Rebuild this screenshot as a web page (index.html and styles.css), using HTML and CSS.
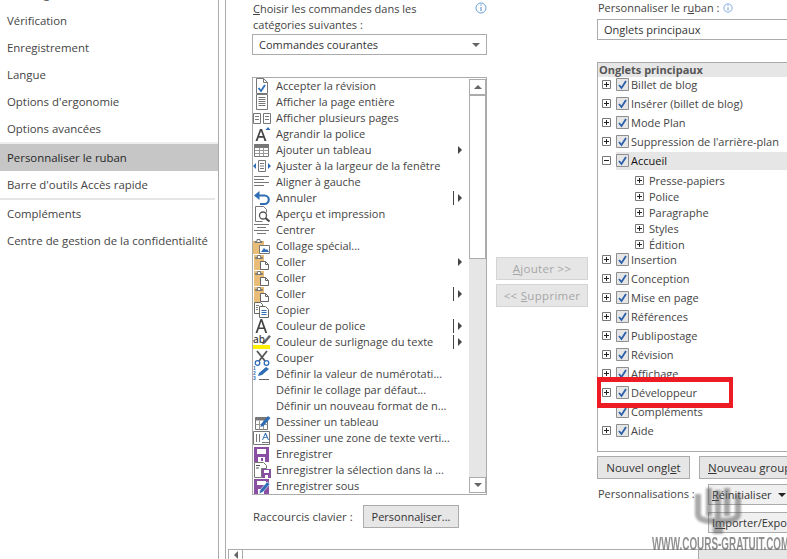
FILE: index.html
```html
<!DOCTYPE html>
<html lang="fr">
<head>
<meta charset="utf-8">
<title>Options Word</title>
<link rel="stylesheet" href="styles.css">
</head>
<body>
<svg class="defs" width="0" height="0" aria-hidden="true">
  <symbol id="i-accept" viewBox="0 0 18 16"><path d="M3.5.5h7l4 4v11h-11z" fill="#fff" stroke="#777"/><path d="M10.500.5v4h4" fill="none" stroke="#777"/><path d="M5.500 10l2.500 3 4-6" fill="none" stroke="#2f6db5" stroke-width="1.800"/></symbol>
  <symbol id="i-page" viewBox="0 0 18 16"><path d="M3.500.5h11v15h-11z" fill="#fff" stroke="#777"/><path d="M5.500 3.500h7M5.500 5.500h7M5.500 7.500h7M5.500 9.500h7M5.500 11.500h7" stroke="#777"/></symbol>
  <symbol id="i-pages" viewBox="0 0 18 16"><path d="M.5 3.500h7v10h-7zM10.500 3.500h7v10h-7z" fill="#fff" stroke="#777"/><path d="M2 6.500h4M2 9.500h4M12 6.500h4M12 9.500h4" stroke="#777"/></symbol>
  <symbol id="i-grow" viewBox="0 0 18 16"><path d="M2.500 15L7 3h2l4.500 12h-2l-1.100-3.200H5.600L4.500 15zM6.200 10h3.600L8 4.900z" fill="#444"/><path d="M12.500 4l2.500-3 2.500 3z" fill="#2f6db5"/></symbol>
  <symbol id="i-table" viewBox="0 0 18 16"><path d="M1.500 2.500h14v12h-14z" fill="#fff" stroke="#777"/><path d="M1.500 2.500h14v3h-14z" fill="#777" stroke="#777"/><path d="M1.500 8.500h14M1.500 11.500h14M6.500 5.500v9M10.500 5.500v9" stroke="#999"/></symbol>
  <symbol id="i-fit" viewBox="0 0 18 16"><path d="M5.500 2.500h7v11h-7z" fill="#fff" stroke="#777"/><path d="M7 5.500h4M7 8h4M7 10.500h4" stroke="#777"/><path d="M0 8l3-3v6zM18 8l-3-3v6z" fill="#2f6db5"/></symbol>
  <symbol id="i-left" viewBox="0 0 18 16"><path d="M1 2.500h15M1 5.500h10M1 8.500h15M1 11.500h10" stroke="#777"/></symbol>
  <symbol id="i-undo" viewBox="0 0 18 16"><path d="M5 5.500h6.500a4 4 0 0 1 0 8.500H7" fill="none" stroke="#2f6db5" stroke-width="2.200"/><path d="M1 5.500L6.500 1v9z" fill="#2f6db5"/></symbol>
  <symbol id="i-preview" viewBox="0 0 18 16"><path d="M2.500.5h8l3 3v3M2.500.5v15h7" fill="none" stroke="#777"/><circle cx="10" cy="9.500" r="3.500" fill="#fff" stroke="#555" stroke-width="1.300"/><path d="M12.500 12l4 3.500" stroke="#444" stroke-width="2"/></symbol>
  <symbol id="i-center" viewBox="0 0 18 16"><path d="M1 2.500h15M4 5.500h9M1 8.500h15M4 11.500h9" stroke="#777"/></symbol>
  <symbol id="i-pastes" viewBox="0 0 18 16"><path d="M0 3h11v13H0z" fill="#e9bd78"/><path d="M4 1.500h3v2h2v1H2v-1h2z" fill="#fff" stroke="#777"/><path d="M6.500 7.500h10v8h-10z" fill="#fff" stroke="#777"/><path d="M8 14l3-4 2 2 1-1 2 3z" fill="#2f6db5"/></symbol>
  <symbol id="i-paste" viewBox="0 0 18 16"><path d="M1 1h10v15H1z" fill="#e9bd78"/><path d="M4.500 1.500h3v2h2v1h-7v-1h2z" fill="#fff" stroke="#777"/><path d="M7.500 7.500h5l3 3v5h-8z" fill="#fff" stroke="#666"/><path d="M12.500 7.500v3h3" fill="none" stroke="#666"/></symbol>
  <symbol id="i-copy" viewBox="0 0 18 16"><path d="M1.500.5h6l2 2v9h-8z" fill="#fff" stroke="#666"/><path d="M6.500 4.500h6l3 3v8h-9z" fill="#fff" stroke="#666"/><path d="M8.500 8.500h5M8.500 10.500h5M8.500 12.500h5" stroke="#2f6db5"/><path d="M3 3.500h3M3 5.500h2M3 7.500h2" stroke="#777"/></symbol>
  <symbol id="i-font" viewBox="0 0 18 16"><path d="M2.500 15L7.500 1h1.700l5 14h-1.900l-1.400-4H5.800l-1.400 4zM6.400 9.400h3.900L8.300 3.500z" fill="#444"/></symbol>
  <symbol id="i-high" viewBox="0 0 18 16"><path d="M10 8l6-7 2 1.500-6 7-3 1z" fill="#666"/><path d="M0 11h17v4H0z" fill="#ffef00"/></symbol>
  <symbol id="i-cut" viewBox="0 0 18 16"><path d="M4 1l8 10M14 1l-8 10" stroke="#555" stroke-width="1.800"/><circle cx="4.500" cy="13" r="2.300" fill="#fff" stroke="#2f6db5" stroke-width="1.300"/><circle cx="13.500" cy="13" r="2.300" fill="#fff" stroke="#2f6db5" stroke-width="1.300"/></symbol>
  <symbol id="i-num" viewBox="0 0 18 16"><path d="M6 7l7-6 3 2-7 6-4 1z" fill="#2f6db5"/><path d="M6 13.500h10" stroke="#666"/></symbol>
  <symbol id="i-draw" viewBox="0 0 18 16"><path d="M2.500 3.500h12v12h-12z" fill="#fff" stroke="#777"/><path d="M2.500 3.500h12v3h-12z" fill="#777"/><path d="M2.500 10.500h12M6.500 6.500v9M10.500 6.500v9" stroke="#999"/><path d="M8 10l7-8 2.500 2-7 8-3 1z" fill="#2f6db5"/></symbol>
  <symbol id="i-vtext" viewBox="0 0 18 16"><path d="M.5 1.500h16v13H.5z" fill="#fff" stroke="#777"/><path d="M3.500 4v8M6.500 4v8" stroke="#777"/><path d="M9 10l3-7h1l3 7h-1l-.8-2h-3.400L10 10zM11 7.200h2.600L12.500 4.400z" fill="#2f6db5"/><path d="M9 12.500h7" stroke="#777"/></symbol>
  <symbol id="i-save" viewBox="0 0 18 16"><path d="M1 1h15v15H1z" fill="#8a4ea3"/><path d="M4 3h9v5H4z" fill="#fff"/><path d="M5 11h7v5H5z" fill="#fff"/><path d="M8 12h2v3H8z" fill="#8a4ea3"/></symbol>
  <symbol id="i-saves" viewBox="0 0 18 16"><path d="M1.500.5h9l3 3v3h-5v9h-7z" fill="#fff" stroke="#777"/><path d="M3 3.500h4M3 6h3" stroke="#555"/><path d="M9 7h9v9H9z" fill="#8a4ea3"/><path d="M11 8h5v3h-5zM12 13h3v3h-3z" fill="#fff"/></symbol>
  <symbol id="i-saveas" viewBox="0 0 18 16"><path d="M1 1h15v15H1z" fill="#8a4ea3"/><path d="M4 3h9v4H4zM5 11h6v5H5z" fill="#fff"/><path d="M7 12l7-8 3 2-7 8-4 2z" fill="#2f6db5" stroke="#fff" stroke-width=".6"/></symbol>
  <symbol id="i-info" viewBox="0 0 12 12"><circle cx="6" cy="6" r="5" fill="#fff" stroke="#6aa0d8"/><path d="M5.500 2.500h1v1.200h-1zM5.500 5h1v4h-1z" fill="#4a86c5"/></symbol>
  <symbol id="i-check" viewBox="0 0 13 13"><path d="M.5.5h12v12H.5z" fill="#e6e6e6" stroke="#8e8e8e"/><path d="M3 7l2.500 3L10 3" fill="none" stroke="#2b5fa8" stroke-width="1.800"/></symbol>
  <symbol id="i-plus" viewBox="0 0 9 9"><path d="M.5.500h8v8h-8z" fill="#fff" stroke="#777"/><path d="M2 4.500h5M4.500 2v5" stroke="#222"/></symbol>
  <symbol id="i-minus" viewBox="0 0 9 9"><path d="M.5.500h8v8h-8z" fill="#fff" stroke="#777"/><path d="M2 4.500h5" stroke="#222"/></symbol>
</svg>

<div class="app">
  <nav class="nav">
    <a class="nav-item">Affichage</a>
    <a class="nav-item">Vérification</a>
    <a class="nav-item">Enregistrement</a>
    <a class="nav-item">Langue</a>
    <a class="nav-item">Options d'ergonomie</a>
    <a class="nav-item nav-last">Options avancées</a>
    <a class="nav-item nav-active">Personnaliser le ruban</a>
    <a class="nav-item nav-sep">Barre d'outils Accès rapide</a>
    <a class="nav-item">Compléments</a>
    <a class="nav-item">Centre de gestion de la confidentialité</a>
  </nav>

  <main class="main">
    <div class="content">
      <section class="col-left">
        <div class="label-row">
          <label class="label"><u>C</u>hoisir les commandes dans les<br>catégories suivantes :</label>
          <svg class="info"><use href="#i-info"/></svg>
        </div>
        <div class="combo"><span>Commandes courantes</span><i class="combo-arrow"></i></div>
        <div class="cmd-box">
          <ul class="cmd-list">
            <li class="cmd"><svg class="ico"><use href="#i-accept"/></svg>Accepter la révision</li>
            <li class="cmd"><svg class="ico"><use href="#i-page"/></svg>Afficher la page entière</li>
            <li class="cmd"><svg class="ico"><use href="#i-pages"/></svg>Afficher plusieurs pages</li>
            <li class="cmd"><svg class="ico"><use href="#i-grow"/></svg>Agrandir la police</li>
            <li class="cmd"><svg class="ico"><use href="#i-table"/></svg>Ajouter un tableau<i class="sub"></i></li>
            <li class="cmd"><svg class="ico"><use href="#i-fit"/></svg>Ajuster à la largeur de la fenêtre</li>
            <li class="cmd"><svg class="ico"><use href="#i-left"/></svg>Aligner à gauche</li>
            <li class="cmd"><svg class="ico"><use href="#i-undo"/></svg>Annuler<i class="sub split"></i></li>
            <li class="cmd"><svg class="ico"><use href="#i-preview"/></svg>Aperçu et impression</li>
            <li class="cmd"><svg class="ico"><use href="#i-center"/></svg>Centrer</li>
            <li class="cmd"><svg class="ico"><use href="#i-pastes"/></svg>Collage spécial...</li>
            <li class="cmd"><svg class="ico"><use href="#i-paste"/></svg>Coller<i class="sub"></i></li>
            <li class="cmd"><svg class="ico"><use href="#i-paste"/></svg>Coller</li>
            <li class="cmd"><svg class="ico"><use href="#i-paste"/></svg>Coller<i class="sub split"></i></li>
            <li class="cmd"><svg class="ico"><use href="#i-copy"/></svg>Copier</li>
            <li class="cmd"><svg class="ico"><use href="#i-font"/></svg>Couleur de police<i class="sub split"></i></li>
            <li class="cmd"><span class="ico-wrap"><svg class="ico"><use href="#i-high"/></svg><span class="ab">ab</span></span>Couleur de surlignage du texte<i class="sub split"></i></li>
            <li class="cmd"><svg class="ico"><use href="#i-cut"/></svg>Couper</li>
            <li class="cmd"><span class="ico-wrap"><svg class="ico"><use href="#i-num"/></svg><span class="nums">123</span></span>Définir la valeur de numérotati...</li>
            <li class="cmd"><span class="ico-blank"></span>Définir le collage par défaut...</li>
            <li class="cmd"><span class="ico-blank"></span>Définir un nouveau format de n...</li>
            <li class="cmd"><svg class="ico"><use href="#i-draw"/></svg>Dessiner un tableau</li>
            <li class="cmd"><svg class="ico"><use href="#i-vtext"/></svg>Dessiner une zone de texte verti...</li>
            <li class="cmd"><svg class="ico"><use href="#i-save"/></svg>Enregistrer</li>
            <li class="cmd"><svg class="ico"><use href="#i-saves"/></svg>Enregistrer la sélection dans la ...</li>
            <li class="cmd"><svg class="ico"><use href="#i-saveas"/></svg>Enregistrer sous</li>
          </ul>
          <div class="vscroll">
            <span class="sb-btn"><i class="tri-up"></i></span>
            <span class="sb-thumb"></span>
            <span class="sb-track"></span>
            <span class="sb-btn"><i class="tri-down"></i></span>
          </div>
        </div>
        <div class="shortcut">
          <span class="label label-shortcut">Raccourcis clavier :</span>
          <button class="btn btn-custom">Personna<u>l</u>iser...</button>
        </div>
      </section>

      <section class="col-mid">
        <button class="btn btn-off"><u>A</u>jouter &gt;&gt;</button>
        <button class="btn btn-off">&lt;&lt; <u>S</u>upprimer</button>
      </section>

      <section class="col-right">
        <div class="label-row label-single">
          <label class="label">Personnaliser le r<u>u</u>ban :</label>
          <svg class="info info-inline"><use href="#i-info"/></svg>
        </div>
        <div class="combo combo-open"><span>Onglets principaux</span></div>
        <div class="tree">
          <div class="tree-head">Onglets principaux</div>
          <div class="row"><svg class="exp"><use href="#i-plus"/></svg><svg class="chk"><use href="#i-check"/></svg>Billet de blog</div>
          <div class="row"><svg class="exp"><use href="#i-plus"/></svg><svg class="chk"><use href="#i-check"/></svg>Insérer (billet de blog)</div>
          <div class="row"><svg class="exp"><use href="#i-plus"/></svg><svg class="chk"><use href="#i-check"/></svg>Mode Plan</div>
          <div class="row"><svg class="exp"><use href="#i-plus"/></svg><svg class="chk"><use href="#i-check"/></svg>Suppression de l'arrière-plan</div>
          <div class="row row-selected"><svg class="exp"><use href="#i-minus"/></svg><span class="row-band"><svg class="chk"><use href="#i-check"/></svg>Accueil</span></div>
          <div class="subs">
            <div class="subrow"><svg class="exp"><use href="#i-plus"/></svg>Presse-papiers</div>
            <div class="subrow"><svg class="exp"><use href="#i-plus"/></svg>Police</div>
            <div class="subrow"><svg class="exp"><use href="#i-plus"/></svg>Paragraphe</div>
            <div class="subrow"><svg class="exp"><use href="#i-plus"/></svg>Styles</div>
            <div class="subrow"><svg class="exp"><use href="#i-plus"/></svg>Édition</div>
          </div>
          <div class="row"><svg class="exp"><use href="#i-plus"/></svg><svg class="chk"><use href="#i-check"/></svg>Insertion</div>
          <div class="row"><svg class="exp"><use href="#i-plus"/></svg><svg class="chk"><use href="#i-check"/></svg>Conception</div>
          <div class="row"><svg class="exp"><use href="#i-plus"/></svg><svg class="chk"><use href="#i-check"/></svg>Mise en page</div>
          <div class="row"><svg class="exp"><use href="#i-plus"/></svg><svg class="chk"><use href="#i-check"/></svg>Références</div>
          <div class="row"><svg class="exp"><use href="#i-plus"/></svg><svg class="chk"><use href="#i-check"/></svg>Publipostage</div>
          <div class="row"><svg class="exp"><use href="#i-plus"/></svg><svg class="chk"><use href="#i-check"/></svg>Révision</div>
          <div class="row"><svg class="exp"><use href="#i-plus"/></svg><svg class="chk"><use href="#i-check"/></svg>Affichage</div>
          <div class="row"><svg class="exp"><use href="#i-plus"/></svg><svg class="chk"><use href="#i-check"/></svg>Développeur</div>
          <div class="row"><span class="exp-blank"></span><svg class="chk"><use href="#i-check"/></svg>Compléments</div>
          <div class="row"><svg class="exp"><use href="#i-plus"/></svg><svg class="chk"><use href="#i-check"/></svg>Aide</div>
        </div>
        <div class="new-row">
          <button class="btn btn-new">Nouvel ongl<u>e</u>t</button>
          <button class="btn btn-group"><u>N</u>ouveau groupe</button>
        </div>
        <div class="custom-row">
          <span class="label">Personnalisations :</span>
          <div class="custom-btns">
            <button class="btn btn-reset"><u>R</u>éinitialiser<i class="tri-down tri-dark"></i></button>
            <button class="btn btn-reset">I<u>m</u>porter/Exporter</button>
          </div>
        </div>
      </section>
    </div>
    <div class="hscroll">
      <span class="hs-btn"><i class="tri-left"></i></span>
      <span class="hs-thumb"></span>
      <span class="hs-track"></span>
    </div>
  </main>
</div>

<div class="highlight"></div>
<div class="watermark">
  <svg class="wm-logo" viewBox="0 0 46 48"><path d="M0 6h6v22H0zM40 6h6v22h-6zM11 0h6v28h-6zM29 0h6v28h-6zM20 2h6v30h-6z" fill="#555"/><path d="M0 26q0 10 18 10v10h10V36q18 0 18-10h-6q0 4-12 4H18q-12 0-12-4z" fill="#555"/></svg>
  <span class="wm-text">WWW.COURS-GRATUIT.COM</span>
</div>
</body>
</html>
```

FILE: styles.css
```css
* { box-sizing: border-box; }
html, body { margin: 0; height: 100%; overflow: hidden; background: #fff; }
body { font-family: "Open Sans", "Liberation Sans", sans-serif; font-size: 11px; color: #444; }
.defs { position: absolute; }
u { text-underline-offset: 1px; }
i { display: block; }

.app { display: flex; height: 559px; width: 787px; overflow: hidden; }

.nav { width: 219px; flex: none; border-right: 1px solid #ababab; margin-top: -20px; height: 579px; font-size: 11.4px; }
.nav-item { display: flex; align-items: center; height: 27px; padding-left: 7px; white-space: nowrap; }
.nav-last { height: 29px; border-bottom: 2px solid #eee; }
.nav-active { background: #c6c6c6; color: #262626; }
.nav-sep { height: 29px; border-bottom: 2px solid #e6e6e6; margin-right: 3px; }

.main { margin-left: 6px; width: 562px; flex: none; border-left: 1px solid #ababab; display: flex; flex-direction: column; }
.content { height: 549px; display: grid; grid-template-columns: 235px 92px 190px; column-gap: 9px; padding-left: 26px; overflow: hidden; }

.col-left, .col-right { min-width: 0; }
.label { line-height: 16px; color: #444; white-space: nowrap; }
.label-row { display: flex; justify-content: space-between; align-items: flex-start; height: 34px; padding: 1px 0 0 1px; }
.label-single { height: 19px; padding-top: 0; justify-content: flex-start; }
.info { width: 12px; height: 12px; margin-top: 1px; }
.info-inline { width: 10px; height: 10px; margin: 3px 0 0 4px; }

.combo { height: 21px; border: 1px solid #ababab; display: flex; align-items: center; justify-content: space-between; padding: 0 6px; color: #333; }
.combo-open { border-right: 0; width: 190px; }
.combo-arrow { width: 0; height: 0; border: 4px solid transparent; border-top: 4px solid #666; border-bottom: 0; }

.cmd-box { margin-top: 22px; height: 418px; border: 1px solid #ababab; display: flex; }
.cmd-list { list-style: none; margin: 0; padding: 0; flex: 1; min-width: 0; }
.cmd { height: 16px; display: flex; align-items: center; padding-bottom: 2px; white-space: nowrap; }
.ico { width: 18px; height: 16px; flex: none; margin-right: 5px; display: block; align-self: flex-start; }
.ico-blank { width: 23px; flex: none; }
.ico-wrap { position: relative; flex: none; width: 23px; height: 16px; align-self: flex-start; }
.ab { position: absolute; left: 0; top: -1px; font-size: 10px; color: #444; font-weight: 600; line-height: 12px; }
.nums { position: absolute; left: 0; top: 0; width: 5px; font-family: "Liberation Sans", sans-serif; font-size: 5px; line-height: 5px; font-weight: 700; color: #2f6db5; word-break: break-all; white-space: normal; }
.sub { margin: 2px 7px 0 auto; width: 0; height: 0; border: 4px solid transparent; border-left: 4px solid #444; border-right: 0; position: relative; }
.split::before { content: ""; position: absolute; left: -9px; top: -7px; width: 1px; height: 14px; background: #444; }

.vscroll { width: 17px; flex: none; display: flex; flex-direction: column; margin: 1px 0; background: #e6e6e6; }
.sb-btn { height: 16px; background: #fff; border: 1px solid #ababab; display: flex; align-items: center; justify-content: center; flex: none; }
.sb-thumb { height: 164px; background: #fff; border: 1px solid #ababab; flex: none; }
.sb-track { flex: 1; }
.tri-up { width: 0; height: 0; border: 4px solid transparent; border-bottom: 4px solid #666; border-top: 0; }
.tri-down { width: 0; height: 0; border: 4px solid transparent; border-top: 4px solid #666; border-bottom: 0; }
.tri-left { width: 0; height: 0; border: 4px solid transparent; border-right: 4px solid #666; border-left: 0; }
.tri-dark { display: inline-block; border-top-color: #222; margin: 0 0 2px 6px; }

.shortcut { display: flex; align-items: center; margin-top: 10px; padding-left: 1px; }
.label-shortcut { width: 110px; flex: none; font-size: 11.4px; }
.btn { display: block; font: inherit; color: #333; background: #e6e6e6; border: 1px solid #ababab; padding: 0; white-space: nowrap; text-align: center; }
.btn-custom { width: 96px; height: 23px; }

.col-mid { padding-top: 257px; display: flex; flex-direction: column; gap: 4px; }
.btn-off { height: 23px; border-color: #d4d4d4; color: #a6a6a6; font-size: 11.5px; letter-spacing: .3px; }

.tree { margin-top: 22px; height: 390px; border: 1px solid #ababab; border-width: 1px 0 1px 1px; }
.tree-head { height: 14px; margin-bottom: -2px; padding-left: 1px; background: #e6e6e6; font-weight: 700; color: #555; line-height: 14px; white-space: nowrap; }
.row { height: 19px; display: flex; align-items: center; white-space: nowrap; padding-left: 4px; position: relative; }
.exp { width: 9px; height: 9px; flex: none; margin-right: 5px; }
.exp-blank { width: 14px; flex: none; }
.chk { width: 13px; height: 13px; flex: none; margin-right: 2px; }
.row-band { flex: 1; display: flex; align-items: center; height: 18px; background: #e6e6e6; color: #111; font-weight: 500; }
.subs { margin: 2px 0 -2px; }
.subrow { height: 16px; display: flex; align-items: center; padding-left: 37px; white-space: nowrap; }

.new-row { display: flex; gap: 9px; margin-top: 4px; width: 220px; }
.btn-new { width: 93px; height: 23px; flex: none; font-size: 11.5px; }
.btn-group { width: 120px; height: 23px; flex: none; text-align: left; padding-left: 8px; font-size: 11.5px; }

.custom-row { display: flex; margin-top: 5px; width: 220px; }
.custom-row .label { width: 111px; flex: none; padding: 2px 0 0 1px; }
.custom-btns { display: flex; flex-direction: column; gap: 7px; flex: none; width: 100px; }
.btn-reset { height: 21px; text-align: left; padding-left: 3px; background: #f0f0f0; }

.hscroll { height: 10px; display: flex; margin-left: 2px; border-top: 1px solid #ababab; }
.hs-btn { width: 15px; border-left: 1px solid #ababab; border-right: 1px solid #ababab; display: flex; align-items: center; justify-content: center; flex: none; }
.hs-thumb { width: 456px; flex: none; border-right: 1px solid #ababab; }
.hs-track { flex: 1; background: #e6e6e6; }

.highlight { position: absolute; left: 597px; top: 377px; width: 136px; height: 31px; border: 5px solid #ed1c24; border-width: 5px 4px; }

.watermark { position: absolute; left: 650px; top: 488px; width: 135px; height: 66px; pointer-events: none; }
.wm-logo { position: absolute; left: 45px; top: 0; width: 46px; height: 48px; opacity: .5; filter: blur(1.3px); }
.wm-text { position: absolute; left: 2px; top: 46px; font-family: "Liberation Sans", sans-serif; font-weight: 700; font-size: 18px; line-height: 20px; color: #555; opacity: .65; white-space: nowrap; display: block; transform: scaleX(.55); transform-origin: 0 50%; filter: blur(.7px); }
```
